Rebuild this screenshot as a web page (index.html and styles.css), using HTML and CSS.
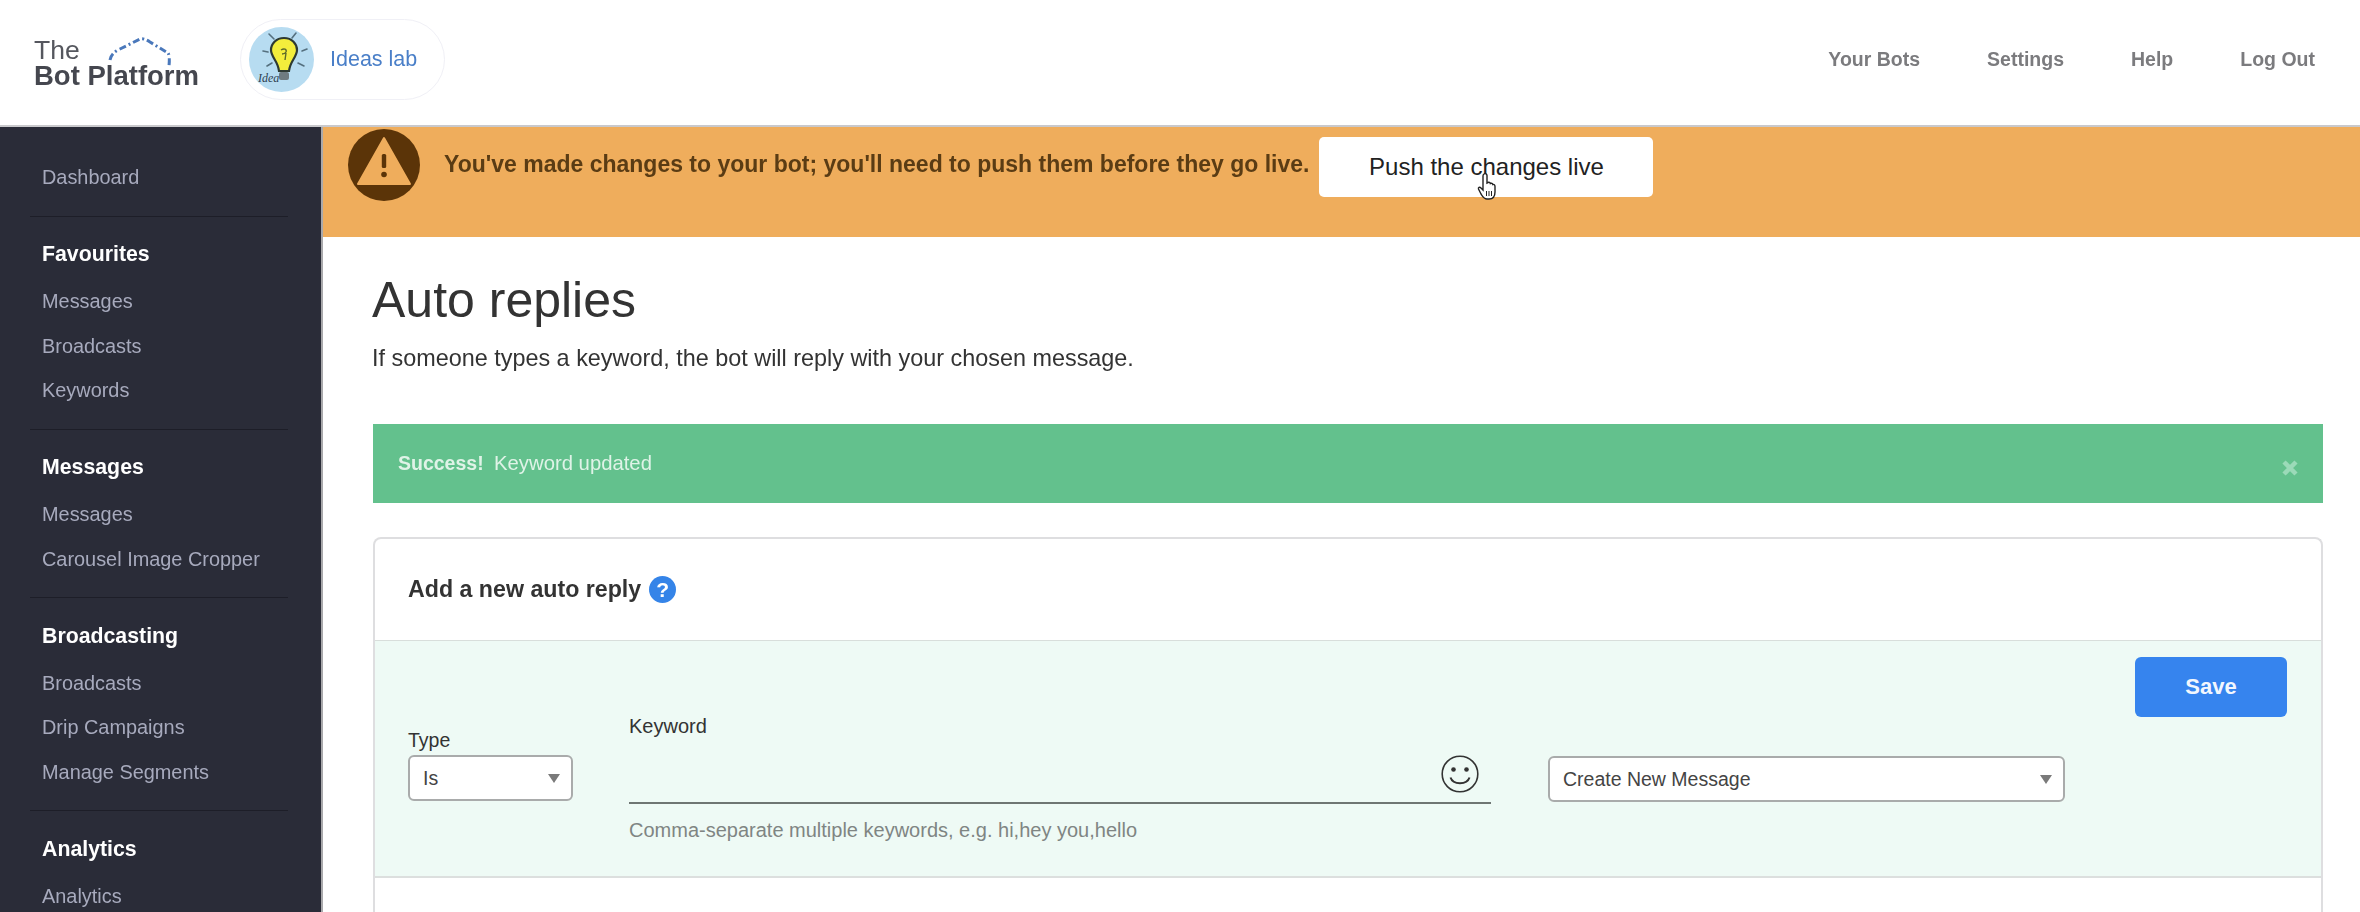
FILE: index.html
```html
<!DOCTYPE html>
<html lang="en">
<head>
<meta charset="utf-8">
<title>Auto replies - The Bot Platform</title>
<link rel="stylesheet" href="styles.css">
</head>
<body>
<div class="page">
  <header class="topbar">
    <a class="logo">
      <svg class="logo-arc" viewBox="0 0 70 36" width="70" height="36"><path d="M4 30 Q5 23 14 19 L34 9 Q38 8 44 12 L62 23 Q64 26 63 36" fill="none" stroke="#4a78bb" stroke-width="3" stroke-dasharray="7 3 2 3" /></svg>
      <span class="logo-the">The</span>
      <span class="logo-name">Bot Platform</span>
    </a>
    <a class="bot-pill">
      <svg class="bot-avatar" viewBox="0 0 65 65" width="65" height="65">
        <circle cx="32.5" cy="32.5" r="32.5" fill="#b7dcf1"/>
        <g stroke="#55707f" stroke-width="1.6" stroke-linecap="round">
          <path d="M20 7 25 12M47 6 43 11M14 24 19 25M53 24 58 22M23 36 18 39M49 36 55 39"/>
        </g>
        <path d="M35 11C27 11 22 17 22 23 22 30 29 34 30 44H40C41 34 48 30 48 23 48 17 43 11 35 11Z" fill="#f3ee3c" stroke="#2e3a33" stroke-width="2.2"/>
        <path d="M32 23C35 21 38 22 37 25 36 27 34 27 33 27M37 26 36 33" fill="none" stroke="#5b6a2a" stroke-width="1.4"/>
        <rect x="30" y="45" width="10" height="8" rx="2" fill="#6f7b80"/>
        <text class="bot-avatar-note" x="9" y="55">Idea</text>
      </svg>
      <span class="bot-name">Ideas lab</span>
    </a>
    <nav class="topnav">
      <a>Your Bots</a>
      <a>Settings</a>
      <a>Help</a>
      <a>Log Out</a>
    </nav>
  </header>

  <div class="layout">
    <aside class="sidebar">
      <div class="side-top"><a class="side-link">Dashboard</a></div>
      <section class="side-group">
        <h3 class="side-head">Favourites</h3>
        <a class="side-link">Messages</a>
        <a class="side-link">Broadcasts</a>
        <a class="side-link">Keywords</a>
      </section>
      <section class="side-group">
        <h3 class="side-head">Messages</h3>
        <a class="side-link">Messages</a>
        <a class="side-link">Carousel Image Cropper</a>
      </section>
      <section class="side-group">
        <h3 class="side-head">Broadcasting</h3>
        <a class="side-link">Broadcasts</a>
        <a class="side-link">Drip Campaigns</a>
        <a class="side-link">Manage Segments</a>
      </section>
      <section class="side-group">
        <h3 class="side-head">Analytics</h3>
        <a class="side-link">Analytics</a>
      </section>
    </aside>

    <main class="main">
      <div class="banner">
        <svg class="banner-icon" viewBox="0 0 72 72" width="72" height="72">
          <circle cx="36" cy="36" r="36" fill="#5b3408"/>
          <path d="M36 9 62 55H10Z" fill="#efad5c" stroke="#efad5c" stroke-width="2" stroke-linejoin="round"/>
          <rect x="33.8" y="25" width="4.4" height="14" rx="1.5" fill="#5b3408"/>
          <circle cx="36" cy="45.500" r="2.800" fill="#5b3408"/>
        </svg>
        <p class="banner-text">You've made changes to your bot; you'll need to push them before they go live.</p>
        <button class="push-btn">Push the changes live
          <svg class="cursor" viewBox="0 0 20 28" width="20" height="28"><path d="M7 2C8.500 1 10 2 10 3.500V11L11 10.500C12 10 13 10.500 13.300 11.500C14.500 11 15.500 11.500 15.800 12.500C17 12 18 13 18 14.500V20C18 24 16 27 12 27H10C7 27 6 25 4 22L1.500 17C1 15.500 2.500 14.500 4 16L6 18V4C6 3 6.300 2.400 7 2Z" fill="#fff" stroke="#222" stroke-width="1.4"/><path d="M9.500 19V24M12 19V24M14.500 19V24" stroke="#222" stroke-width="1"/></svg>
        </button>
      </div>

      <div class="content">
        <h1 class="title">Auto replies</h1>
        <p class="lead">If someone types a keyword, the bot will reply with your chosen message.</p>

        <div class="alert">
          <p class="alert-text"><strong>Success!</strong> <span class="alert-msg">Keyword updated</span></p>
          <svg class="alert-close" viewBox="0 0 18 18" width="18" height="18"><path d="M3 3 15 15M15 3 3 15" stroke="#9bdab8" stroke-width="4.500"/></svg>
        </div>

        <div class="card">
          <div class="card-head">
            <h2 class="card-title">Add a new auto reply</h2>
            <span class="help">?</span>
          </div>
          <div class="form-band">
            <div class="field field-type">
              <label class="field-label">Type</label>
              <div class="select select-type"><span>Is</span><i class="caret"></i></div>
            </div>
            <div class="field field-keyword">
              <label class="field-label">Keyword</label>
              <div class="kw-input">
                <svg class="smiley" viewBox="0 0 38 38" width="38" height="38">
                  <circle cx="19" cy="19" r="17.800" fill="none" stroke="#333" stroke-width="1.600"/>
                  <circle cx="12.500" cy="14.500" r="2.300" fill="#333"/>
                  <circle cx="25.500" cy="14.500" r="2.300" fill="#333"/>
                  <path d="M9.500 22.500C12 30 26 30 28.500 22.500" fill="none" stroke="#333" stroke-width="2"/>
                </svg>
              </div>
              <p class="hint">Comma-separate multiple keywords, e.g. hi,hey you,hello</p>
            </div>
            <div class="field field-message">
              <div class="select select-message"><span>Create New Message</span><i class="caret"></i></div>
            </div>
            <button class="save-btn">Save</button>
          </div>
        </div>
      </div>
    </main>
  </div>
</div>
</body>
</html>
```

FILE: styles.css
```css
* { box-sizing: border-box; }
html, body { margin: 0; height: 100%; }
body { font-family: "Liberation Sans", Arial, sans-serif; color: #333; background: #fff; overflow: hidden; }
p, h1, h2, h3 { margin: 0; }

.page { width: 2360px; height: 912px; display: flex; flex-direction: column; overflow: hidden; filter: blur(0.45px); }

/* top bar */
.topbar { height: 127px; flex: none; display: flex; align-items: center; background: #fff; border-bottom: 2px solid #c9c9cc; padding: 0 45px 7px 34px; }
.logo { position: relative; width: 166px; height: 70px; flex: none; display: flex; flex-direction: column; color: #45474f; margin-top: 24px; }
.logo-arc { position: absolute; left: 72px; top: -6px; }
.logo-the { font-size: 26.5px; line-height: 28px; color: #55575e; }
.logo-name { font-size: 27.5px; line-height: 24px; font-weight: 700; }
.bot-pill { display: flex; align-items: center; width: 205px; height: 81px; margin-left: 40px; padding-left: 8px; border: 1px solid #f0f0f6; border-radius: 41px; flex: none; }
.bot-avatar { flex: none; }
.bot-avatar-note { font: italic 12px "Liberation Serif", serif; fill: #2f4252; }
.bot-name { margin-left: 16px; font-size: 21.5px; color: #4a7fc8; }
.topnav { margin-left: auto; display: flex; gap: 67px; font-size: 19.5px; font-weight: 700; color: #7b7b7e; }

/* layout */
.layout { flex: 1; min-height: 0; display: flex; }

/* sidebar */
.sidebar { width: 323px; flex: none; background: #2a2c38; border-right: 2px solid #a9a9ac; padding-top: 28px; overflow: hidden; }
.side-top { margin: 0 33px 0 30px; padding-bottom: 16px; }
.side-group { margin: 0 33px 0 30px; padding: 15.75px 0; border-top: 1px solid #1d1e28; }
.side-link { display: block; height: 44.5px; line-height: 44.5px; padding-left: 12px; font-size: 19.9px; color: #a7aabd; white-space: nowrap; }
.side-head { height: 47px; line-height: 44.5px; padding-left: 12px; font-size: 21.3px; font-weight: 700; color: #fff; }

/* main */
.main { flex: 1; min-width: 0; display: flex; flex-direction: column; overflow: hidden; }
.banner { height: 110px; flex: none; display: flex; align-items: flex-start; background: #efad5c; padding: 2px 0 0 25px; }
.banner-icon { flex: none; }
.banner-text { margin-left: 24px; height: 70px; line-height: 70px; font-size: 23px; font-weight: 700; color: #5a3c14; white-space: nowrap; }
.push-btn { position: relative; width: 334px; height: 60px; margin: 8px 0 0 10px; background: #fff; border: 0; border-radius: 5px; font: 24px "Liberation Sans", Arial, sans-serif; color: #222; }
.cursor { position: absolute; left: 158px; top: 35px; }

.content { flex: 1; min-height: 0; padding: 34px 37px 0 50px; display: flex; flex-direction: column; }
.title { font-size: 50px; line-height: 58px; font-weight: 400; color: #333; margin-left: -1px; }
.lead { margin-top: 14px; font-size: 23.4px; line-height: 30px; color: #333; margin-left: -1px; }

.alert { margin-top: 51px; height: 79px; flex: none; display: flex; align-items: center; justify-content: space-between; padding: 0 24px 0 25px; background: #63c18d; color: #dff3e7; font-size: 19.5px; }
.alert-msg { margin-left: 5px; font-size: 20.3px; }
.alert-close { flex: none; margin-top: 8px; }

.card { margin-top: 34px; flex: 1; border: 2px solid #dedee0; border-bottom: 0; border-radius: 8px 8px 0 0; min-height: 0; }
.card-head { height: 101px; display: flex; align-items: center; padding-left: 33px; }
.card-title { font-size: 23.2px; font-weight: 700; color: #333; }
.help { margin-left: 8px; width: 27px; height: 27px; border-radius: 50%; background: #3584e8; color: #fff; font-size: 21px; font-weight: 700; line-height: 27px; text-align: center; }

.form-band { position: relative; height: 238px; display: flex; align-items: flex-start; padding-left: 33px; background: #eefaf5; border-top: 1px solid #d8dedb; border-bottom: 2px solid #dcdfde; }
.field-label { display: block; font-size: 19.5px; line-height: 24px; color: #333; }
.field-type { margin-top: 87px; }
.select { position: relative; height: 46px; background: #fff; border: 2px solid #a9abab; border-radius: 6px; display: flex; align-items: center; padding-left: 13px; font-size: 19.5px; color: #444; }
.select-type { width: 165px; margin-top: 3px; }
.select-message { width: 517px; }
.caret { position: absolute; top: 17px; right: 11px; border: 6px solid transparent; border-top: 9px solid #7a7a7a; border-bottom: 0; }
.field-keyword { margin: 73px 0 0 56px; width: 862px; }
.field-keyword .field-label { font-size: 20px; }
.kw-input { position: relative; height: 65.5px; border-bottom: 2px solid #6e7673; }
.smiley { position: absolute; right: 12px; top: 17px; }
.hint { margin-top: 14px; font-size: 20px; line-height: 24px; color: #7f8583; }
.field-message { margin: 115px 0 0 57px; }
.save-btn { position: absolute; right: 34px; top: 16px; width: 152px; height: 60px; background: #3684ee; color: #f2f7fe; border: 0; border-radius: 6px; font: 700 22px "Liberation Sans", Arial, sans-serif; }
```
